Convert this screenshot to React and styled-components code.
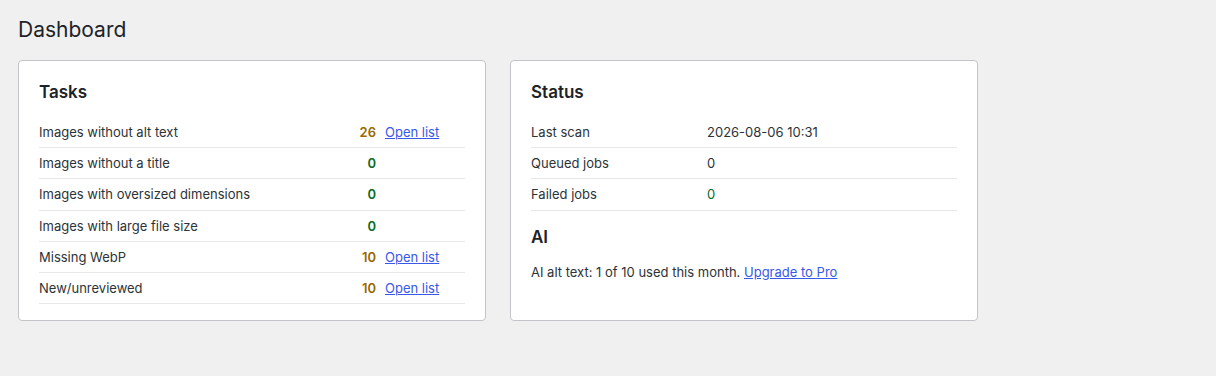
import React from 'react';
import styled, { createGlobalStyle } from 'styled-components';

const GlobalStyle = createGlobalStyle`
  html, body {
    margin: 0;
    background: #f0f0f1;
  }
  body {
    font-family: Inter, "Liberation Sans", Arial, sans-serif;
    font-size: 13px;
    color: #1d2327;
  }
`;

const tasks = [
  { label: 'Images without alt text', count: 26, link: true },
  { label: 'Images without a title', count: 0 },
  { label: 'Images with oversized dimensions', count: 0 },
  { label: 'Images with large file size', count: 0 },
  { label: 'Missing WebP', count: 10, link: true },
  { label: 'New/unreviewed', count: 10, link: true },
];

const status = [
  { label: 'Last scan', value: '2026-08-06 10:31' },
  { label: 'Queued jobs', value: '0' },
  { label: 'Failed jobs', value: '0', ok: true },
];

const App = () => {
  return (
    <Page>
      <GlobalStyle />
      <Title>Dashboard</Title>
      <Cards>
        <Card>
          <CardTitle>Tasks</CardTitle>
          <TaskTable>
            {tasks.map((t) => (
              <TaskRow key={t.label}>
                <Cell>{t.label}</Cell>
                <Count $warn={t.count > 0}>{t.count}</Count>
                <Cell>{t.link ? <Link href="#">Open list</Link> : null}</Cell>
              </TaskRow>
            ))}
          </TaskTable>
        </Card>
        <Card>
          <CardTitle>Status</CardTitle>
          <StatusTable>
            {status.map((s) => (
              <StatusRow key={s.label}>
                <Cell>{s.label}</Cell>
                <Value $ok={s.ok}>{s.value}</Value>
              </StatusRow>
            ))}
          </StatusTable>
          <SubTitle>AI</SubTitle>
          <Note>
            AI alt text: 1 of 10 used this month. <Link href="#">Upgrade to Pro</Link>
          </Note>
        </Card>
      </Cards>
    </Page>
  );
};
export default App;

const Page = styled.div`
  padding: 15px 18px;
`;

const Title = styled.h1`
  margin: 0 0 16px;
  font-size: 21px;
  font-weight: 400;
  line-height: 29px;
  color: #1d2327;
`;

const Cards = styled.div`
  display: flex;
  gap: 24px;
  align-items: stretch;
`;

const Card = styled.div`
  box-sizing: border-box;
  width: 468px;
  background: #fff;
  border: 1px solid #c3c4c7;
  border-radius: 4px;
  padding: 20px 20px 16px;
`;

const CardTitle = styled.h2`
  margin: 0 0 14px;
  font-size: 17px;
  font-weight: 600;
  line-height: 22px;
  color: #1d2327;
`;

const SubTitle = styled(CardTitle)`
  margin: 15px 0 14px;
`;

const TaskTable = styled.div`
  display: grid;
  grid-template-columns: 1fr auto 80px;
`;

const StatusTable = styled.div`
  display: grid;
  grid-template-columns: 176px 1fr;
`;

const TaskRow = styled.div`
  display: contents;
  & > * {
    border-bottom: 1px solid #e8e8e8;
  }
`;

const StatusRow = styled(TaskRow)``;

const Cell = styled.div`
  height: 30.2px;
  display: flex;
  align-items: center;
  color: #2c3338;
`;

const Count = styled(Cell)`
  justify-content: flex-end;
  padding-right: 9px;
  font-weight: 600;
  color: ${({ $warn }) => ($warn ? '#996800' : '#0a6b23')};
`;

const Value = styled(Cell)`
  color: ${({ $ok }) => ($ok ? '#0a6b23' : '#2c3338')};
`;

const Link = styled.a`
  color: #3858e9;
  text-decoration: underline;
`;

const Note = styled.p`
  margin: 0;
  line-height: 20px;
  color: #2c3338;
`;
